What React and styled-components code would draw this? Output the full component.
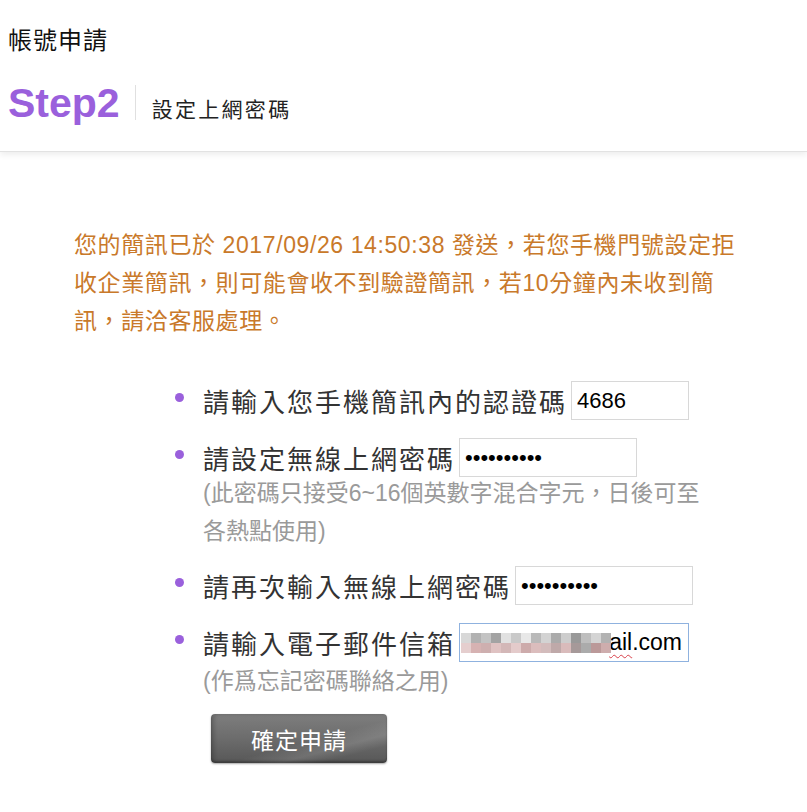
import React from 'react';
import styled, { createGlobalStyle } from 'styled-components';

const GlobalStyle = createGlobalStyle`
  body {
    margin: 0;
    background: #fff;
    font-family: "Liberation Sans", "Noto Sans CJK TC", sans-serif;
  }
`;

const Header = styled.header`
  padding: 29px 8px 28px;
  border-bottom: 1px solid #e2e2e2;
  box-shadow: 0 3px 6px rgba(0, 0, 0, 0.07);
`;

const PageTitle = styled.h1`
  margin: 0;
  font-size: 24px;
  line-height: 24px;
  font-weight: normal;
  color: #111;
  letter-spacing: 1px;
`;

const StepRow = styled.div`
  display: flex;
  align-items: flex-end;
  margin-top: 30px;
`;

const StepNum = styled.span`
  font-size: 41px;
  line-height: 40px;
  font-weight: bold;
  color: #9a60dc;
`;

const Divider = styled.span`
  width: 1px;
  height: 35px;
  margin: 0 16px 3px 15px;
  background: #e0e0e0;
`;

const StepLabel = styled.span`
  font-size: 21px;
  line-height: 22px;
  margin-bottom: 2px;
  color: #222;
  letter-spacing: 2.3px;
`;

const Main = styled.main`
  padding: 74px 0 40px 74px;
`;

const Notice = styled.p`
  margin: 0;
  font-size: 23px;
  line-height: 38px;
  letter-spacing: 0.6px;
  color: #c9792a;
  white-space: nowrap;
`;

const FieldList = styled.ul`
  list-style: none;
  margin: 41px 0 0 101px;
  padding: 0;
`;

const Item = styled.li`
  margin-bottom: ${props => props.$gap ?? 18}px;
`;

const Row = styled.div`
  display: flex;
  align-items: center;
  height: 39px;
`;

const Bullet = styled.span`
  width: 9px;
  height: 9px;
  border-radius: 50%;
  background: #9a60dc;
  margin: 0 19px 7px 0;
  flex-shrink: 0;
`;

const Label = styled.label`
  font-size: 26px;
  letter-spacing: 2px;
  color: #333;
  margin-right: 4px;
  white-space: nowrap;
`;

const TextInput = styled.input`
  box-sizing: border-box;
  width: ${props => props.$w}px;
  height: 39px;
  border: 1px solid #d8d8d8;
  padding: 0 5px;
  font-family: "Liberation Sans", sans-serif;
  font-size: 22px;
  color: #000;
  background: #fff;
  outline: none;
`;

const EmailField = styled.div`
  box-sizing: border-box;
  width: 230px;
  height: 39px;
  border: 1px solid #8fb2df;
  padding: 0 6px 0 3px;
  display: flex;
  align-items: center;
  justify-content: flex-end;
  overflow: hidden;
  font-size: 23px;
  color: #000;
`;

const Mosaic = styled.span`
  display: grid;
  grid-template-columns: repeat(15, 10px);
  grid-template-rows: 10px 10px;
  flex-shrink: 0;
  margin-right: -2px;
  opacity: 0.9;
  filter: blur(0.4px);
`;

const Cell = styled.span`
  background: ${props => props.$c};
`;

const Typo = styled.span`
  text-decoration: underline wavy #d8404a;
  text-decoration-thickness: 1px;
  text-underline-offset: 4px;
`;

const Note = styled.p`
  margin: ${props => props.$offset ?? 0}px 0 0 28px;
  font-size: 23px;
  line-height: 38px;
  letter-spacing: 0;
  color: #9a9a9a;
  white-space: nowrap;
`;

const SubmitButton = styled.button`
  display: block;
  margin: 14px 0 0 36px;
  width: 176px;
  height: 49px;
  border: none;
  border-radius: 4px;
  background:
    linear-gradient(165deg, transparent 55%, rgba(255, 255, 255, 0.12) 70%, transparent 82%),
    linear-gradient(to bottom, #7e7e7e 0%, #6c6c6c 50%, #575757 100%);
  box-shadow: inset 0 -2px 2px rgba(0, 0, 0, 0.25), inset 3px 0 4px rgba(0, 0, 0, 0.2), 0 1px 2px rgba(0, 0, 0, 0.35);
  color: #fff;
  font-family: "Liberation Sans", "Noto Sans CJK TC", sans-serif;
  font-size: 23px;
  letter-spacing: 1px;
  cursor: pointer;
`;

// pixelated colours that hide the front of the e-mail address
const topRow = ['#d4d4d4', '#a9a9a9', '#bdbdbd', '#9a9a9a', '#dedede', '#c4c4c4', '#e6e6e6', '#b2b2b2', '#cfcfcf', '#a3a3a3', '#c8c8c8', '#8f8f8f', '#b8b8b8', '#d0d0d0', '#aaaaaa'];
const bottomRow = ['#e3c9c9', '#d2aaaa', '#c9a7a7', '#dcbcbc', '#cfb0b0', '#e2c6c6', '#c8a2a2', '#d8b6b6', '#cfb5b5', '#b9a0a0', '#d5b4b4', '#9d8f8f', '#a3a3a3', '#b48f8f', '#c9a5a5'];

const App = () => {
  return (
    <>
      <GlobalStyle />
      <Header>
        <PageTitle>帳號申請</PageTitle>
        <StepRow>
          <StepNum>Step2</StepNum>
          <Divider />
          <StepLabel>設定上網密碼</StepLabel>
        </StepRow>
      </Header>

      <Main>
        <Notice>
          您的簡訊已於 2017/09/26 14:50:38 發送，若您手機門號設定拒<br />
          收企業簡訊，則可能會收不到驗證簡訊，若10分鐘內未收到簡<br />
          訊，請洽客服處理。
        </Notice>

        <FieldList>
          <Item>
            <Row>
              <Bullet />
              <Label>請輸入您手機簡訊內的認證碼</Label>
              <TextInput $w={118} type="text" defaultValue="4686" />
            </Row>
          </Item>
          <Item $gap={16}>
            <Row>
              <Bullet />
              <Label>請設定無線上網密碼</Label>
              <TextInput $w={178} type="password" defaultValue="abcdefghij" />
            </Row>
            <Note $offset={-3}>
              (此密碼只接受6~16個英數字混合字元，日後可至<br />
              各熱點使用)
            </Note>
          </Item>
          <Item>
            <Row>
              <Bullet />
              <Label>請再次輸入無線上網密碼</Label>
              <TextInput $w={178} type="password" defaultValue="abcdefghij" />
            </Row>
          </Item>
          <Item>
            <Row>
              <Bullet />
              <Label>請輸入電子郵件信箱</Label>
              <EmailField>
                <Mosaic>
                  {topRow.map((c, i) => <Cell key={'t' + i} $c={c} />)}
                  {bottomRow.map((c, i) => <Cell key={'b' + i} $c={c} />)}
                </Mosaic>
                <Typo>ail</Typo>.com
              </EmailField>
            </Row>
            <Note>(作爲忘記密碼聯絡之用)</Note>
            <SubmitButton>確定申請</SubmitButton>
          </Item>
        </FieldList>
      </Main>
    </>
  );
};

export default App;
